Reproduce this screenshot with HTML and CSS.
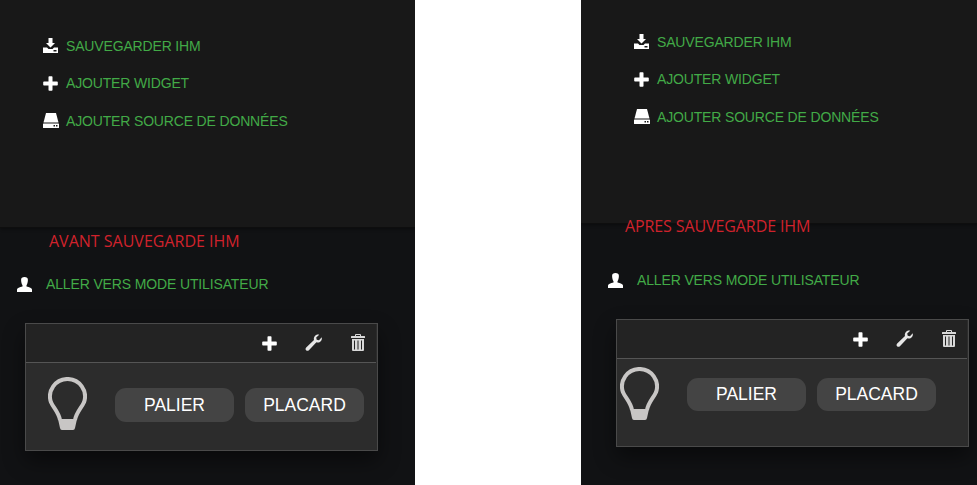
FILE: index.html
```html
<!DOCTYPE html>
<html lang="fr">
<head>
    <meta charset="UTF-8">
    <meta name="viewport" content="width=device-width, initial-scale=1.0">
    <title>Sauvegarde IHM</title>
    <link rel="stylesheet" href="styles.css">
</head>
<body>
    <svg class="sprites" aria-hidden="true">
        <symbol id="i-save" viewBox="0 0 15 15">
            <path d="M5.500 0h4v5h2.500L7.500 9.500 3 5h2.500z"/>
            <path fill-rule="evenodd" d="M0 9.500h4l1.500 1.500h4L11 9.500h4V15H0zM10.500 12v1.500h3V12z"/>
        </symbol>
        <symbol id="i-plus" viewBox="0 0 15 15">
            <path d="M5.500 1q0-.8.8-.8h2.400q.8 0 .8.8v4.500H14q.8 0 .8.8v2.400q0 .8-.8.8H9.500V14q0 .8-.8.8H6.300q-.8 0-.8-.8V9.500H1q-.8 0-.8-.8V6.300q0-.8.8-.8h4.500z"/>
        </symbol>
        <symbol id="i-hdd" viewBox="0 0 16 15">
            <path d="M3 0h10l2.500 9.500H.5z"/>
            <path fill-rule="evenodd" d="M.5 10.500h15q.5 0 .5.5v3.500q0 .5-.5.5H.5q-.5 0-.5-.5V11q0-.5.5-.5zM10.500 12v1.500h1.500V12zm2.500 0v1.500h1.500V12z"/>
        </symbol>
        <symbol id="i-user" viewBox="0 0 15 15">
            <path d="M7.500 0c2.200 0 3.400 1 3.400 2.800 0 2.200-.5 4.300-1.400 5.400v1.300c2.800.7 5.500 1.800 5.500 3V15H0v-2.500c0-1.200 2.700-2.300 5.500-3V8.200C4.600 7.100 4.100 5 4.100 2.800 4.100 1 5.300 0 7.500 0z"/>
        </symbol>
        <symbol id="i-wrench" viewBox="0 0 17 17">
            <path d="M16.700 3.300c.5 2-.2 3.800-1.800 4.700-1.200.7-2.500.7-3.500.2L3.900 16.200c-.8.800-2 .9-2.800.1-.8-.8-.7-2 .1-2.800L9 5.900C8.600 4.700 8.800 3.300 9.700 2.200 10.800.9 12.500.3 14.200.8l-3 2.600.5 2.300 2.300.6z"/>
        </symbol>
        <symbol id="i-trash" viewBox="0 0 14 17">
            <path d="M5 0h4q1 0 1 1v1h3.500q.5 0 .5.500V4H0V2.500Q0 2 .5 2H4V1q0-1 1-1zm0 1v1h4V1z" fill-rule="evenodd"/>
            <path fill-rule="evenodd" d="M1 5h12v11q0 1-1 1H2q-1 0-1-1zm2 1.500V15.500h1V6.500zm3.500 0V15.500h1V6.500zm3.500 0V15.500h1V6.500z"/>
        </symbol>
        <symbol id="i-bulb" viewBox="0 0 39 53">
            <path fill="none" stroke="currentColor" stroke-width="4" d="M12 43C10.500 35 5.500 31 3 25.300a17.500 17.500 0 1 1 33 0C33.500 31 28.500 35 27 43"/>
            <path d="M10 42h19l-2 9q-.3 2-2 2H14q-1.700 0-2-2z"/>
        </symbol>
    </svg>

    <section class="shot shot-before">
        <header class="top">
            <ul class="menu">
                <li><svg class="icon"><use href="#i-save"/></svg>SAUVEGARDER IHM</li>
                <li><svg class="icon"><use href="#i-plus"/></svg>AJOUTER WIDGET</li>
                <li><svg class="icon icon-hdd"><use href="#i-hdd"/></svg>AJOUTER SOURCE DE DONNÉES</li>
            </ul>
        </header>
        <div class="lower">
            <p class="note">AVANT SAUVEGARDE IHM</p>
            <div class="user-link"><svg class="icon"><use href="#i-user"/></svg>ALLER VERS MODE UTILISATEUR</div>
            <div class="widget">
                <div class="widget-head">
                    <svg class="tool tool-plus"><use href="#i-plus"/></svg>
                    <svg class="tool tool-wrench"><use href="#i-wrench"/></svg>
                    <svg class="tool tool-trash"><use href="#i-trash"/></svg>
                </div>
                <div class="widget-body">
                    <svg class="bulb"><use href="#i-bulb"/></svg>
                    <button class="switch">PALIER</button>
                    <button class="switch">PLACARD</button>
                </div>
            </div>
        </div>
    </section>

    <section class="shot shot-after">
        <header class="top">
            <ul class="menu">
                <li><svg class="icon"><use href="#i-save"/></svg>SAUVEGARDER IHM</li>
                <li><svg class="icon"><use href="#i-plus"/></svg>AJOUTER WIDGET</li>
                <li><svg class="icon icon-hdd"><use href="#i-hdd"/></svg>AJOUTER SOURCE DE DONNÉES</li>
            </ul>
        </header>
        <div class="lower">
            <p class="note">APRES SAUVEGARDE IHM</p>
            <div class="user-link"><svg class="icon"><use href="#i-user"/></svg>ALLER VERS MODE UTILISATEUR</div>
            <div class="widget">
                <div class="widget-head">
                    <svg class="tool tool-plus"><use href="#i-plus"/></svg>
                    <svg class="tool tool-wrench"><use href="#i-wrench"/></svg>
                    <svg class="tool tool-trash"><use href="#i-trash"/></svg>
                </div>
                <div class="widget-body">
                    <svg class="bulb"><use href="#i-bulb"/></svg>
                    <button class="switch">PALIER</button>
                    <button class="switch">PLACARD</button>
                </div>
            </div>
        </div>
    </section>
</body>
</html>
```

FILE: styles.css
```css
:root {
    --green: #42aa47;
    --red: #d0222c;
}

* {
    box-sizing: border-box;
    margin: 0;
    padding: 0;
}

body {
    background: #fff;
    font-family: "Liberation Sans", Arial, sans-serif;
    height: 485px;
    overflow: hidden;
    display: flex;
    justify-content: space-between;
}

.sprites {
    display: none;
}

.shot {
    height: 485px;
    display: flex;
    flex-direction: column;
    background: #111214;
    overflow: hidden;
}

.shot-before {
    width: 415px;
}

.shot-after {
    width: 396px;
}

.top {
    background: #181818;
    border-bottom: 1px solid #0e0e0e;
    box-shadow: 0 1px 3px rgba(0,0,0,0.4);
}

.shot-before .top {
    height: 228px;
    padding: 27px 0 0 43px;
}

.shot-after .top {
    height: 224px;
    padding: 23px 0 0 53px;
}

.menu {
    list-style: none;
}

.menu li {
    height: 37.5px;
    display: flex;
    align-items: center;
    gap: 8px;
    color: var(--green);
    font-size: 14px;
    letter-spacing: -0.16px;
}

.icon {
    width: 15px;
    height: 15px;
    fill: #fff;
    flex: none;
}

.icon-hdd {
    width: 16px;
    margin-right: -1px;
}

.note {
    color: var(--red);
    font-family: "Open Sans", sans-serif;
    font-size: 16px;
    line-height: 20px;
}

.shot-before .note {
    margin: 3px 0 0 49px;
}

.shot-after .note {
    margin: -8px 0 0 44px;
    letter-spacing: -0.1px;
}

.user-link {
    height: 20px;
    display: flex;
    align-items: center;
    gap: 14px;
    color: var(--green);
    font-size: 14px;
    letter-spacing: -0.14px;
}

.shot-before .user-link {
    margin: 23px 0 0 17px;
}

.shot-after .user-link {
    margin: 34px 0 0 27px;
}

.widget {
    width: 353px;
    height: 128px;
    margin-top: 29px;
    background: #2c2c2c;
    border: 1px solid #4a4a4a;
    box-shadow: 0 10px 20px rgba(0,0,0,0.45);
}

.shot-before .widget {
    margin-left: 25px;
}

.shot-after .widget {
    margin-left: 35px;
}

.widget-head {
    height: 39px;
    margin-right: 1px;
    background: #232323;
    border-bottom: 1px solid #555;
    display: flex;
    align-items: center;
    justify-content: flex-end;
    padding: 0 11px 0 0;
}

.tool {
    fill: #fff;
}

.tool-plus {
    width: 15px;
    height: 15px;
    margin-top: 1px;
    margin-right: -1px;
}

.tool-wrench {
    width: 17px;
    height: 17px;
    margin-left: 29px;
    fill: #e6e6e6;
    margin-top: -1px;
}

.tool-trash {
    width: 14px;
    height: 17px;
    margin-left: 29px;
    fill: #d8d8d8;
    margin-top: -1px;
}

.widget-body {
    display: flex;
    align-items: flex-start;
}

.shot-before .widget-body {
    padding: 14px 0 0 22px;
}

.shot-after .widget-body {
    padding: 8px 0 0 3px;
}

.bulb {
    width: 39px;
    height: 53px;
    color: #c8c6c5;
    fill: #c8c6c5;
    flex: none;
    margin-right: 28px;
}

.switch {
    width: 119px;
    height: 34px;
    margin: 11px 11px 0 0;
    background: #444;
    color: #fff;
    border: none;
    border-radius: 11px;
    font-family: "Liberation Sans", Arial, sans-serif;
    font-size: 17.5px;
}

.shot-after .switch {
    height: 33px;
}
```
